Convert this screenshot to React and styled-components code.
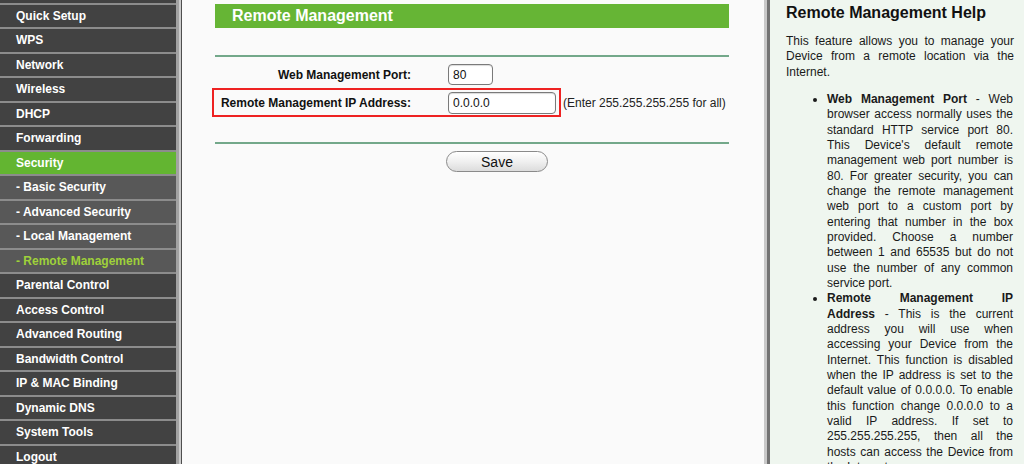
import React from "react";
import styled, { createGlobalStyle } from "styled-components";

const GlobalStyle = createGlobalStyle`
  html, body {
    margin: 0;
    height: 464px;
    overflow: hidden;
    font-family: "Liberation Sans", Arial, sans-serif;
  }
`;

const Page = styled.div`
  display: flex;
  width: 1024px;
  height: 464px;
  overflow: hidden;
  background: #fafafa;
`;

const Sidebar = styled.nav`
  flex: 0 0 182px;
  padding-top: 2.5px;
  box-sizing: border-box;
  background: linear-gradient(
    to right,
    #424242 0 176px,
    #a2a2a2 176px 179px,
    #cbcbcb 179px 181px,
    #4e4e4e 181px
  );
`;

const MenuItem = styled.div`
  width: 160px;
  height: 22.5px;
  line-height: 22.5px;
  border-top: 2px solid #8c8c8c;
  padding-left: 16px;
  font-size: 12px;
  font-weight: bold;
  white-space: nowrap;
  color: ${(props) => (props.current ? "#9fd13a" : "#ffffff")};
  background: ${(props) =>
    props.active ? "#63b531" : props.sub ? "#585858" : "#424242"};
`;

const Main = styled.main`
  flex: 1;
  padding: 4px 35px 0 33px;
`;

const TitleBar = styled.div`
  height: 24px;
  line-height: 24px;
  padding-left: 17px;
  background: #66b535;
  color: #ffffff;
  font-size: 16px;
  font-weight: bold;
`;

const Rule = styled.div`
  height: 2px;
  background: #73a88a;
  margin-top: ${(props) => props.top}px;
`;

const Form = styled.div`
  display: flex;
  flex-direction: column;
  margin-top: 4px;
`;

const FieldLine = styled.div`
  display: flex;
  align-items: center;
`;

const Row = styled.div`
  display: flex;
  align-items: center;
  gap: 37px;
  margin-left: -3px;
  padding: ${(props) => props.pad}px 3px ${(props) => props.pad}px 1px;
  border: 2px solid ${(props) => (props.highlight ? "#ee2222" : "transparent")};
`;

const Label = styled.label`
  width: 196px;
  text-align: right;
  font-size: 12px;
  font-weight: bold;
  color: #111111;
`;

const TextInput = styled.input`
  box-sizing: border-box;
  width: ${(props) => props.w}px;
  height: ${(props) => props.h}px;
  padding: 0 4px;
  border: 1px solid #7a7a7a;
  border-radius: 4px;
  background: #ffffff;
  box-shadow: inset 0 1px 1px rgba(0, 0, 0, 0.15);
  font-family: "Liberation Sans", Arial, sans-serif;
  font-size: 12px;
  color: #111111;
  outline: none;
`;

const Hint = styled.span`
  margin-left: 2px;
  font-size: 12px;
  color: #222222;
`;

const ButtonRow = styled.div`
  padding-left: 231px;
  margin-top: 7px;
`;

const SaveButton = styled.button`
  width: 102px;
  height: 21px;
  padding: 0;
  border: 1px solid #8a8a8a;
  border-radius: 11px;
  background: linear-gradient(#ffffff, #f0f0f0 50%, #dcdcdc);
  font-family: "Liberation Sans", Arial, sans-serif;
  font-size: 14px;
  color: #111111;
`;

const Help = styled.aside`
  flex: 0 0 260px;
  box-sizing: border-box;
  border-left: 3px solid #c8c8c8;
  box-shadow: inset 3px 0 0 #727272;
  background: #eff6ef;
  padding: 3px 10px 0 19px;
  color: #1a1a1a;
  font-size: 12px;
  line-height: 15.33px;
`;

const HelpTitle = styled.h2`
  margin: 0 0 12px;
  font-size: 16px;
  line-height: 19px;
  color: #111111;
`;

const HelpText = styled.p`
  margin: 0 0 12px;
  text-align: justify;
`;

const HelpList = styled.ul`
  margin: 0 1px 0 0;
  padding-left: 41px;
  list-style: disc;
`;

const HelpItem = styled.li`
  text-align: justify;
`;

const menu = [
  { label: "Quick Setup" },
  { label: "WPS" },
  { label: "Network" },
  { label: "Wireless" },
  { label: "DHCP" },
  { label: "Forwarding" },
  { label: "Security", active: true },
  { label: "- Basic Security", sub: true },
  { label: "- Advanced Security", sub: true },
  { label: "- Local Management", sub: true },
  { label: "- Remote Management", sub: true, current: true },
  { label: "Parental Control" },
  { label: "Access Control" },
  { label: "Advanced Routing" },
  { label: "Bandwidth Control" },
  { label: "IP & MAC Binding" },
  { label: "Dynamic DNS" },
  { label: "System Tools" },
  { label: "Logout" },
];

const App = () => {
  return (
    <Page>
      <GlobalStyle />
      <Sidebar>
        {menu.map((item) => (
          <MenuItem
            key={item.label}
            sub={item.sub}
            active={item.active}
            current={item.current}
          >
            {item.label}
          </MenuItem>
        ))}
      </Sidebar>

      <Main>
        <TitleBar>Remote Management</TitleBar>
        <Rule top={27} />
        <Form>
          <FieldLine>
            <Row pad={1}>
              <Label>Web Management Port:</Label>
              <TextInput w={45} h={21} defaultValue="80" />
            </Row>
          </FieldLine>
          <FieldLine>
            <Row pad={1.5} highlight>
              <Label>Remote Management IP Address:</Label>
              <TextInput w={108} h={22} defaultValue="0.0.0.0" />
            </Row>
            <Hint>(Enter 255.255.255.255 for all)</Hint>
          </FieldLine>
        </Form>
        <Rule top={25} />
        <ButtonRow>
          <SaveButton>Save</SaveButton>
        </ButtonRow>
      </Main>

      <Help>
        <HelpTitle>Remote Management Help</HelpTitle>
        <HelpText>
          This feature allows you to manage your Device from a remote location
          via the Internet.
        </HelpText>
        <HelpList>
          <HelpItem>
            <b>Web Management Port</b> - Web browser access normally uses the
            standard HTTP service port 80. This Device's default remote
            management web port number is 80. For greater security, you can
            change the remote management web port to a custom port by entering
            that number in the box provided. Choose a number between 1 and
            65535 but do not use the number of any common service port.
          </HelpItem>
          <HelpItem>
            <b>Remote Management IP Address</b> - This is the current address
            you will use when accessing your Device from the Internet. This
            function is disabled when the IP address is set to the default
            value of 0.0.0.0. To enable this function change 0.0.0.0 to a valid
            IP address. If set to 255.255.255.255, then all the hosts can access
            the Device from the Internet.
          </HelpItem>
        </HelpList>
      </Help>
    </Page>
  );
};

export default App;
